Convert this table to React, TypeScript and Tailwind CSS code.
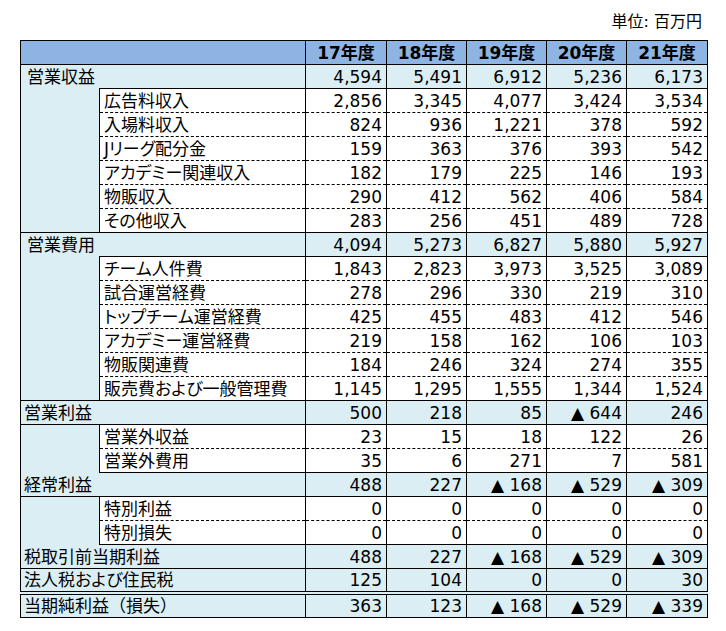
import React from "react";

type Sub = { label: string; v: string[] };
type Group =
  | { kind: "top"; label: string; v: string[]; subs: Sub[] }
  | { kind: "bottom"; label: string; v: string[]; subs: Sub[] }
  | { kind: "plain"; label: React.ReactNode; key: string; v: string[]; double?: boolean };

const groups: Group[] = [
  {
    kind: "top",
    label: "営業収益",
    v: ["4,594", "5,491", "6,912", "5,236", "6,173"],
    subs: [
      { label: "広告料収入", v: ["2,856", "3,345", "4,077", "3,424", "3,534"] },
      { label: "入場料収入", v: ["824", "936", "1,221", "378", "592"] },
      { label: "Jリーグ配分金", v: ["159", "363", "376", "393", "542"] },
      { label: "アカデミー関連収入", v: ["182", "179", "225", "146", "193"] },
      { label: "物販収入", v: ["290", "412", "562", "406", "584"] },
      { label: "その他収入", v: ["283", "256", "451", "489", "728"] },
    ],
  },
  {
    kind: "top",
    label: "営業費用",
    v: ["4,094", "5,273", "6,827", "5,880", "5,927"],
    subs: [
      { label: "チーム人件費", v: ["1,843", "2,823", "3,973", "3,525", "3,089"] },
      { label: "試合運営経費", v: ["278", "296", "330", "219", "310"] },
      { label: "トップチーム運営経費", v: ["425", "455", "483", "412", "546"] },
      { label: "アカデミー運営経費", v: ["219", "158", "162", "106", "103"] },
      { label: "物販関連費", v: ["184", "246", "324", "274", "355"] },
      { label: "販売費および一般管理費", v: ["1,145", "1,295", "1,555", "1,344", "1,524"] },
    ],
  },
  { kind: "plain", key: "営業利益", label: "営業利益", v: ["500", "218", "85", "▲ 644", "246"] },
  {
    kind: "bottom",
    label: "経常利益",
    v: ["488", "227", "▲ 168", "▲ 529", "▲ 309"],
    subs: [
      { label: "営業外収益", v: ["23", "15", "18", "122", "26"] },
      { label: "営業外費用", v: ["35", "6", "271", "7", "581"] },
    ],
  },
  {
    kind: "bottom",
    label: "税取引前当期利益",
    v: ["488", "227", "▲ 168", "▲ 529", "▲ 309"],
    subs: [
      { label: "特別利益", v: ["0", "0", "0", "0", "0"] },
      { label: "特別損失", v: ["0", "0", "0", "0", "0"] },
    ],
  },
  { kind: "plain", key: "法人税", label: "法人税および住民税", v: ["125", "104", "0", "0", "30"] },
  {
    kind: "plain",
    key: "当期純利益",
    label: (
      <>
        当期純利益<span className="[font-feature-settings:normal]">（</span>損失
        <span className="[font-feature-settings:normal]">）</span>
      </>
    ),
    v: ["363", "123", "▲ 168", "▲ 529", "▲ 339"],
    double: true,
  },
];

const years = ["17年度", "18年度", "19年度", "20年度", "21年度"];

const cell = "border border-black h-[24px] p-0 leading-[22px]";
const blue = "bg-[#DAEEF3]";

function SubRows({ subs, spacerClass }: { subs: Sub[]; spacerClass: string }) {
  return (
    <>
      {subs.map((s, i) => {
        const first = i === 0;
        const last = i === subs.length - 1;
        const dash = [
          first ? "" : "[border-top-style:dashed]",
          last ? "" : "[border-bottom-style:dashed]",
        ].join(" ");
        return (
          <tr key={s.label}>
            {first && (
              <td rowSpan={subs.length} className={`${cell} ${blue} ${spacerClass}`} />
            )}
            <td className={`${cell} ${dash} bg-white pl-[4px] text-left whitespace-nowrap [font-feature-settings:'palt']`}>
              {s.label}
            </td>
            {s.v.map((x, j) => (
              <td key={j} className={`${cell} ${dash} bg-white pr-[4px] text-right`}>
                {x}
              </td>
            ))}
          </tr>
        );
      })}
    </>
  );
}

function MajorRow({
  label,
  v,
  labelClass,
  double,
  pad,
}: {
  label: React.ReactNode;
  v: string[];
  labelClass: string;
  double?: boolean;
  pad: string;
}) {
  const d = double ? "border-t-4 [border-top-style:double]" : "";
  return (
    <tr>
      <td
        colSpan={2}
        className={`${cell} ${blue} ${labelClass} ${d} ${pad} text-left whitespace-nowrap [font-feature-settings:'palt']`}
      >
        {label}
      </td>
      {v.map((x, j) => (
        <td key={j} className={`${cell} ${blue} ${d} pr-[4px] text-right`}>
          {x}
        </td>
      ))}
    </tr>
  );
}

export default function App() {
  return (
    <div
      className="w-[726px] h-[631px] bg-white text-black text-[17px]"
      style={{ fontFamily: '"DejaVu Sans", "Noto Sans CJK JP", sans-serif' }}
    >
      <div className="pl-[20px]">
        <div className="w-[687px] h-[40px] flex items-end justify-end pr-[5px] pb-[7px] leading-[22px] text-[16px] [font-feature-settings:'palt']">
          単位: 百万円
        </div>
        <table className="table-fixed border-collapse border border-black w-[687px]">
          <colgroup>
            <col className="w-[79px]" />
            <col className="w-[206px]" />
            <col className="w-[81px]" />
            <col className="w-[80px]" />
            <col className="w-[80px]" />
            <col className="w-[80px]" />
            <col className="w-[81px]" />
          </colgroup>
          <tbody>
            <tr>
              <td colSpan={2} className={`${cell} bg-[#8DB4E2]`} />
              {years.map((y) => (
                <td key={y} className={`${cell} bg-[#8DB4E2] text-center font-bold`}>
                  {y}
                </td>
              ))}
            </tr>
            {groups.map((g) => {
              if (g.kind === "top") {
                return (
                  <React.Fragment key={g.label}>
                    <MajorRow label={g.label} v={g.v} labelClass="border-b-0" pad="pl-[6px]" />
                    <SubRows subs={g.subs} spacerClass="border-t-0 border-r-0" />
                  </React.Fragment>
                );
              }
              if (g.kind === "bottom") {
                return (
                  <React.Fragment key={g.label}>
                    <SubRows subs={g.subs} spacerClass="border-b-0 border-r-0" />
                    <MajorRow label={g.label} v={g.v} labelClass="border-t-0" pad="pl-[3px]" />
                  </React.Fragment>
                );
              }
              return (
                <MajorRow
                  key={g.key}
                  label={g.label}
                  v={g.v}
                  labelClass=""
                  double={g.double}
                  pad="pl-[3px]"
                />
              );
            })}
          </tbody>
        </table>
      </div>
    </div>
  );
}
